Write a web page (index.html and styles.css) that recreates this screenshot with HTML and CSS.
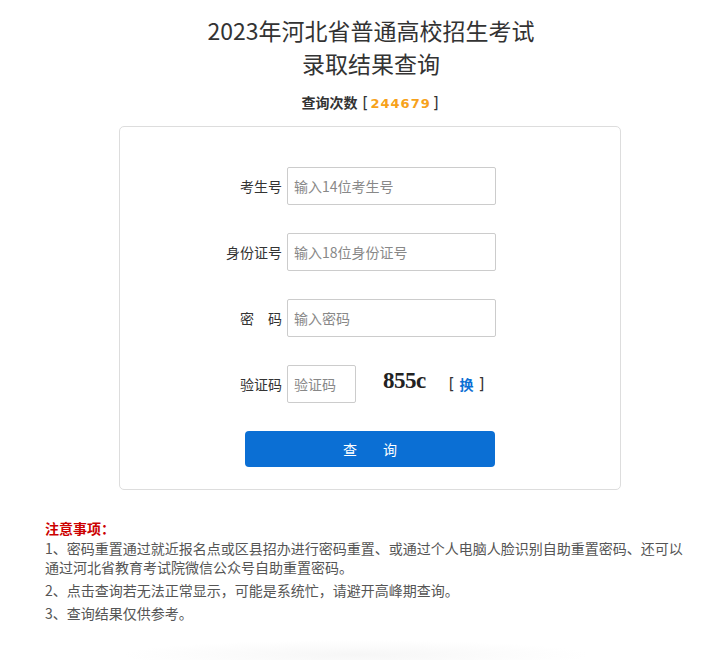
FILE: index.html
```html
<!DOCTYPE html>
<html lang="zh-CN">
<head>
<meta charset="utf-8">
<title>2023年河北省普通高校招生考试录取结果查询</title>
<link rel="stylesheet" href="styles.css">
</head>
<body>
<div class="page">
  <h1 class="title">2023年河北省普通高校招生考试<br>录取结果查询</h1>
  <div class="counter">查询次数 <span class="bracket">[</span><span class="count">244679</span><span class="bracket">]</span></div>
  <div class="card">
    <form class="form">
      <div class="row">
        <label class="label">考生号</label>
        <input class="input" type="text" placeholder="输入14位考生号">
      </div>
      <div class="row">
        <label class="label">身份证号</label>
        <input class="input" type="text" placeholder="输入18位身份证号">
      </div>
      <div class="row">
        <label class="label">密&emsp;码</label>
        <input class="input" type="password" placeholder="输入密码">
      </div>
      <div class="row">
        <label class="label">验证码</label>
        <input class="input input-code" type="text" placeholder="验证码">
        <span class="captcha">855c</span>
        <span class="refresh"><span class="rb">[</span><a class="refresh-link">换</a><span class="rb">]</span></span>
      </div>
      <div class="row row-btn">
        <button class="btn" type="button"><span>查</span><span>询</span></button>
      </div>
    </form>
  </div>
  <div class="notes">
    <div class="notes-title">注意事项：</div>
    <p class="note">1、密码重置通过就近报名点或区县招办进行密码重置、或通过个人电脑人脸识别自助重置密码、还可以通过河北省教育考试院微信公众号自助重置密码。</p>
    <p class="note">2、点击查询若无法正常显示，可能是系统忙，请避开高峰期查询。</p>
    <p class="note">3、查询结果仅供参考。</p>
  </div>
</div>
<div class="footer-shade"></div>
</body>
</html>
```
FILE: styles.css
```css
html, body {
  margin: 0;
  padding: 0;
  background: #fff;
}
body {
  font-family: "Noto Sans CJK SC", "Noto Sans", sans-serif;
  color: #333;
  font-size: 14px;
  height: 660px;
  overflow: hidden;
  position: relative;
}
.page {
  margin-left: 45px;
  width: 652px;
  padding-top: 14px;
}
.title {
  margin: 0;
  font-size: 23px;
  font-weight: normal;
  line-height: 33px;
  text-align: center;
  color: #333;
}
.counter {
  margin-top: 12px;
  text-align: center;
  font-size: 14px;
  font-weight: bold;
  line-height: 20px;
  color: #333;
}
.bracket {
  font-family: "DejaVu Sans", sans-serif;
  font-weight: normal;
  font-size: 15px;
  margin: 0 2px;
}
.count {
  color: #f7a21b;
  letter-spacing: 1px;
  font-family: "DejaVu Sans", sans-serif;
  font-size: 13px;
}
.card {
  width: 500px;
  margin: 12px 0 0 74px;
  border: 1px solid #ddd;
  border-radius: 5px;
  padding: 40px 0 22px;
}
.form {
  display: flex;
  flex-direction: column;
  gap: 28px;
}
.row {
  display: flex;
  align-items: center;
  height: 38px;
}
.label {
  width: 167px;
  padding-right: 5px;
  box-sizing: border-box;
  text-align: right;
  font-size: 14px;
  color: #333;
}
.input {
  width: 209px;
  height: 38px;
  box-sizing: border-box;
  border: 1px solid #ccc;
  border-radius: 2px;
  padding: 0 6px;
  font-family: inherit;
  font-size: 14px;
  color: #333;
  outline: none;
}
.input::placeholder {
  color: #888;
}
.input-code {
  width: 69px;
}
.captcha {
  margin-left: 27px;
  font-family: "Liberation Serif", serif;
  font-weight: bold;
  font-size: 23px;
  color: #222;
  letter-spacing: -0.5px;
  position: relative;
  top: -3px;
}
.refresh {
  margin-left: 23px;
  font-size: 14px;
  color: #333;
  display: flex;
  align-items: center;
  gap: 5px;
}
.rb {
  font-family: "DejaVu Sans", sans-serif;
  font-size: 15px;
}
.refresh-link {
  color: #0b6fd4;
  font-weight: bold;
}
.row-btn {
  height: 36px;
  padding-left: 125px;
}
.btn {
  width: 250px;
  height: 36px;
  border: none;
  border-radius: 4px;
  background: #0b6fd4;
  color: #fff;
  font-family: inherit;
  font-size: 14px;
  cursor: pointer;
  display: flex;
  align-items: center;
  justify-content: center;
  gap: 26px;
  padding: 0;
}
.notes {
  margin-top: 27px;
  width: 644px;
  color: #555;
  font-size: 14px;
  line-height: 19px;
}
.notes-title {
  color: #c00;
  font-weight: bold;
  line-height: 22px;
}
.note {
  margin: 0 0 4px;
}
.footer-shade {
  position: absolute;
  left: 120px;
  right: 120px;
  bottom: -10px;
  height: 30px;
  background: radial-gradient(ellipse at center, rgba(230,230,230,0.35), rgba(255,255,255,0) 70%);
}
```
